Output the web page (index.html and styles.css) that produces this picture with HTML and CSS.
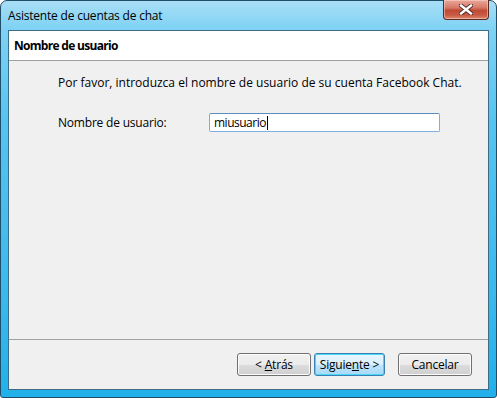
FILE: index.html
```html
<!DOCTYPE html>
<html lang="es">
<head>
    <meta charset="UTF-8">
    <title>Asistente de cuentas de chat</title>
    <link rel="stylesheet" href="styles.css">
</head>
<body>
    <div class="window">
        <div class="titlebar">
            <span class="title">Asistente de cuentas de chat</span>
            <div class="close-btn">
                <svg width="14" height="11" viewBox="0 0 14 11">
                    <path d="M2 1.5 L12 9.5 M12 1.5 L2 9.5" stroke="#4a2a24" stroke-width="4.2" stroke-linecap="square"/>
                    <path d="M2 1.5 L12 9.5 M12 1.5 L2 9.5" stroke="#ffffff" stroke-width="2.4" stroke-linecap="square"/>
                </svg>
            </div>
        </div>
        <div class="client">
            <div class="page-header">Nombre de usuario</div>
            <div class="page-body">
                <p class="intro">Por favor, introduzca el nombre de usuario de su cuenta Facebook Chat.</p>
                <div class="field-row">
                    <label class="field-label">Nombre de usuario:</label>
                    <div class="textbox">miusuario<span class="caret"></span></div>
                </div>
            </div>
            <div class="page-footer">
                <button class="button back">&lt; <u>A</u>trás</button>
                <button class="button default">Siguie<u>n</u>te &gt;</button>
                <button class="button cancel">Cancelar</button>
            </div>
        </div>
    </div>
</body>
</html>
```

FILE: styles.css
```css
html, body {
    margin: 0;
    padding: 0;
    background: #ffffff;
}
body {
    font-family: "Segoe UI", "Open Sans", "Noto Sans", sans-serif;
    font-size: 12px;
    color: #000;
}
.window {
    width: 497px;
    height: 398px;
    box-sizing: border-box;
    border: 1px solid #1e4e68;
    border-radius: 7px 7px 3px 3px;
    background: linear-gradient(to bottom, #a9def6 0px, #7fd2f4 28px, #56c4f0 120px, #3ab8ec 300px, #22b0ea 100%);
    display: flex;
    flex-direction: column;
    padding: 0 7px 7px 7px;
}
.titlebar {
    height: 29px;
    display: flex;
    justify-content: space-between;
    align-items: flex-start;
}
.title {
    margin-top: 6px;
    font-size: 12px;
    color: #000;
    letter-spacing: -0.2px;
}
.close-btn {
    width: 44px;
    height: 19px;
    margin-top: -1px;
    border: 1px solid #5a2a22;
    border-top: none;
    border-radius: 0 0 4px 4px;
    background: linear-gradient(to bottom, #e9a899 0%, #d77a68 40%, #c04b35 55%, #c95a44 80%, #de8a70 100%);
    box-shadow: inset 0 0 0 1px rgba(255, 220, 210, 0.5);
    display: flex;
    align-items: center;
    justify-content: center;
}
.client {
    flex: 1;
    border: 1px solid #3c6c86;
    background: #f0f0f0;
    display: flex;
    flex-direction: column;
}
.page-header {
    height: 29px;
    background: #ffffff;
    border-bottom: 1px solid #a0a0a0;
    font-weight: bold;
    padding-left: 5px;
    line-height: 30px;
    letter-spacing: -0.7px;
}
.page-body {
    flex: 1;
    padding: 13px 0 0 49px;
}
.intro {
    margin: 0;
}
.field-row {
    display: flex;
    align-items: center;
    margin-top: 22px;
}
.field-label {
    width: 151px;
    letter-spacing: -0.2px;
}
.textbox {
    width: 225px;
    height: 17px;
    border: 1px solid #7eaee0;
    border-top-color: #5c8dbd;
    border-radius: 2px;
    background: #ffffff;
    padding-left: 4px;
    line-height: 17px;
    letter-spacing: -0.5px;
    display: flex;
    align-items: center;
}
.caret {
    display: inline-block;
    width: 1px;
    height: 14px;
    margin-left: 1px;
    background: #000;
}
.page-footer {
    border-top: 1px solid #a0a0a0;
    padding: 13px 16px 13px 0;
    display: flex;
    justify-content: flex-end;
}
.button {
    width: 74px;
    height: 23px;
    font-family: "Segoe UI", "Open Sans", "Noto Sans", sans-serif;
    font-size: 12px;
    color: #000;
    letter-spacing: -0.2px;
    border: 1px solid #707070;
    border-radius: 3px;
    background: linear-gradient(to bottom, #f2f2f2 0%, #ebebeb 50%, #dddddd 51%, #cfcfcf 100%);
    box-shadow: inset 0 0 0 1px #fcfcfc;
    padding: 0;
}
.button.default {
    width: 71px;
    margin-left: 3px;
    border-color: #3c7fb1;
    background: linear-gradient(to bottom, #eaf6fd 0%, #d9f0fc 50%, #bee6fd 51%, #a7d9f5 100%);
    box-shadow: inset 0 0 0 1px #48d8fb;
}
.button.cancel {
    margin-left: 13px;
}
```
